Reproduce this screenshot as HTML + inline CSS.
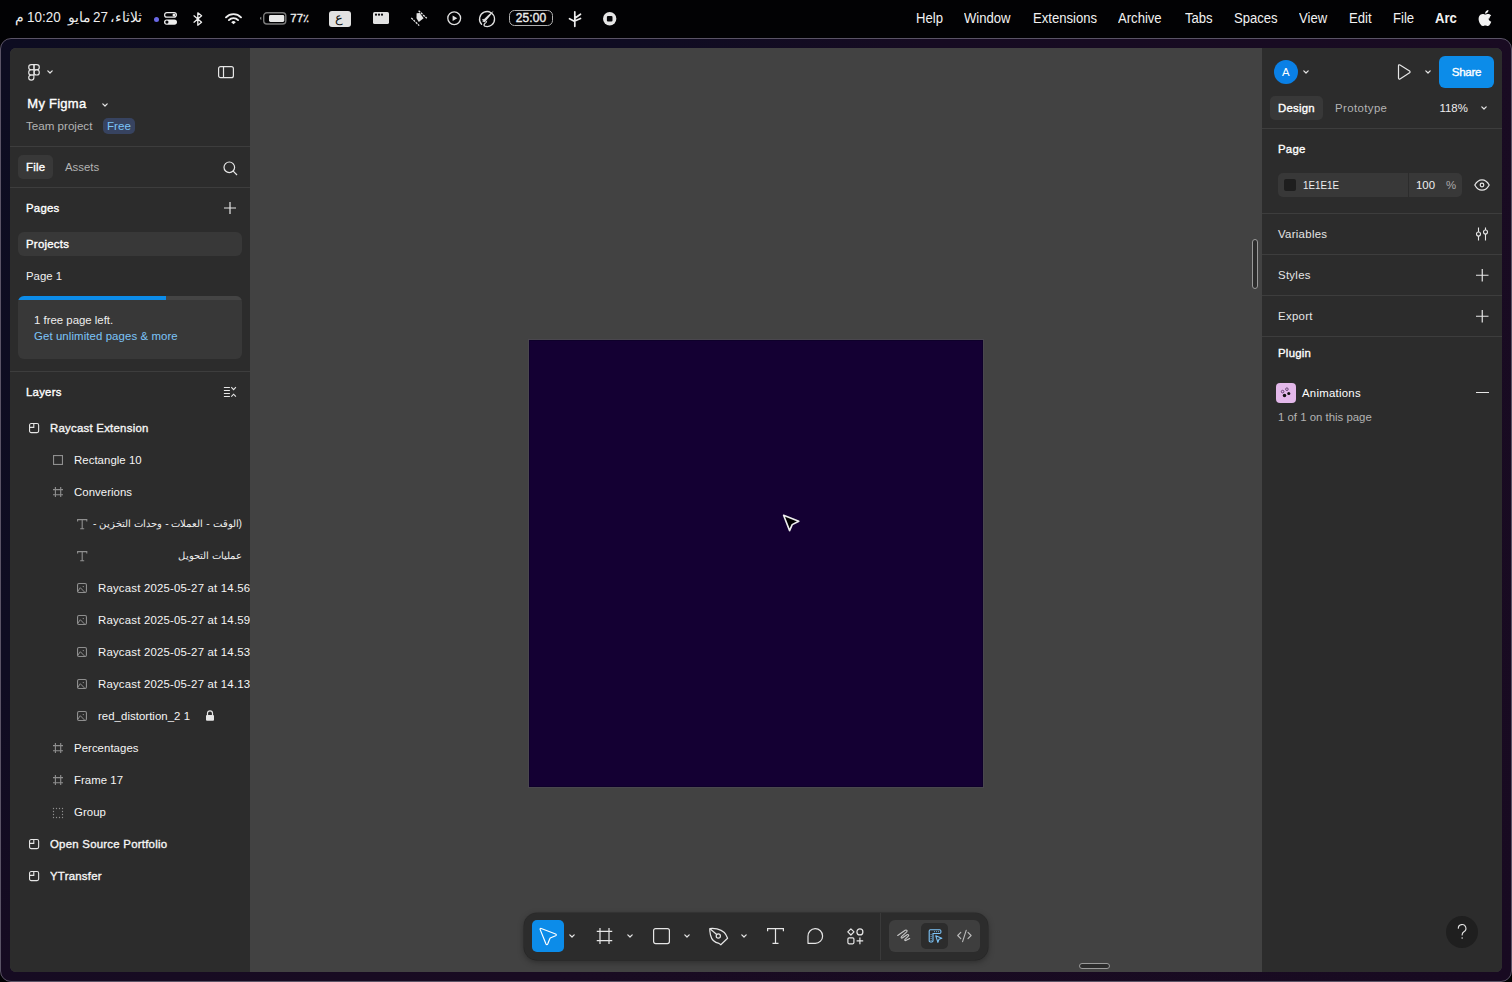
<!DOCTYPE html><html><head><meta charset="utf-8"><style>
*{margin:0;padding:0;box-sizing:border-box}
html,body{width:1512px;height:982px;overflow:hidden;background:#020204;font-family:"Liberation Sans",sans-serif;color:#fff}
.a{position:absolute;white-space:nowrap}
#win{position:absolute;left:0;top:38px;width:1512px;height:944px;border-radius:11px;border:1px solid #5a5366;background:linear-gradient(135deg,#0d0c21 0%,#0f0c22 26%,#160b22 38%,#190b22 60%,#180a21 100%)}
#app{position:absolute;left:10px;top:48px;width:1492px;height:924px;border-radius:6px;overflow:hidden;background:#424242}
.pn{position:absolute;background:#2c2c2c}
.hr{position:absolute;height:1px;background:#3d3d3d}
svg{position:absolute;overflow:visible}
</style></head><body>
<div class="a" style="left:915.8px;top:9.60px;font-size:14px;line-height:17.5px;color:#f2f2f2;transform:scaleX(0.935);transform-origin:0 0">Help</div>
<div class="a" style="left:964px;top:9.60px;font-size:14px;line-height:17.5px;color:#f2f2f2;transform:scaleX(0.935);transform-origin:0 0">Window</div>
<div class="a" style="left:1032.6px;top:9.60px;font-size:14px;line-height:17.5px;color:#f2f2f2;transform:scaleX(0.935);transform-origin:0 0">Extensions</div>
<div class="a" style="left:1118.2px;top:9.60px;font-size:14px;line-height:17.5px;color:#f2f2f2;transform:scaleX(0.935);transform-origin:0 0">Archive</div>
<div class="a" style="left:1184.6px;top:9.60px;font-size:14px;line-height:17.5px;color:#f2f2f2;transform:scaleX(0.935);transform-origin:0 0">Tabs</div>
<div class="a" style="left:1234px;top:9.60px;font-size:14px;line-height:17.5px;color:#f2f2f2;transform:scaleX(0.935);transform-origin:0 0">Spaces</div>
<div class="a" style="left:1299.2px;top:9.60px;font-size:14px;line-height:17.5px;color:#f2f2f2;transform:scaleX(0.935);transform-origin:0 0">View</div>
<div class="a" style="left:1348.6px;top:9.60px;font-size:14px;line-height:17.5px;color:#f2f2f2;transform:scaleX(0.935);transform-origin:0 0">Edit</div>
<div class="a" style="left:1392.6px;top:9.60px;font-size:14px;line-height:17.5px;color:#f2f2f2;transform:scaleX(0.935);transform-origin:0 0">File</div>
<div class="a" style="left:1434.8px;top:9.60px;font-size:14px;line-height:17.5px;color:#f2f2f2;font-weight:bold;transform:scaleX(0.935);transform-origin:0 0">Arc</div>
<svg style="left:1478px;top:9.5px" width="14" height="16" viewBox="0 0 14 16"><path fill="#f2f2f2" d="M11.5 8.5c0-2 1.6-3 1.7-3-1-1.4-2.4-1.6-2.9-1.6-1.2-.1-2.400.7-3 .7-.6 0-1.600-.7-2.600-.7C3.300 3.900 2 4.700 1.300 6c-1.400 2.500-.4 6.100 1 8.100.7 1 1.400 2 2.500 2 1 0 1.300-.6 2.500-.6s1.500.6 2.500.6c1.100 0 1.700-1 2.400-2 .7-1.100 1-2.200 1.100-2.300-.1 0-2.800-1.100-2.800-3.300zM9.500 2.600c.6-.7 1-1.600.9-2.600-.8 0-1.800.6-2.400 1.300-.5.600-1 1.500-.9 2.500.9.100 1.800-.5 2.400-1.200z"/></svg>
<div class="a" style="left:15px;top:9.58px;font-size:13.5px;line-height:16.88px;color:#eee;">م</div>
<div class="a" style="left:26.6px;top:9.10px;font-size:14px;line-height:17.5px;color:#eee;transform:scaleX(0.96);transform-origin:0 0">10:20</div>
<div class="a" style="left:68px;top:9.58px;font-size:13.5px;line-height:16.88px;color:#eee;">مايو</div>
<div class="a" style="left:93.2px;top:9.10px;font-size:14px;line-height:17.5px;color:#eee;transform:scaleX(0.96);transform-origin:0 0">27</div>
<div class="a" style="left:113px;top:9.58px;font-size:13.5px;line-height:16.88px;color:#eee;direction:rtl;unicode-bidi:bidi-override;width:29px;text-align:left">ثلاثاء،</div>
<div class="a" style="left:154px;top:16.5px;width:5px;height:5px;border-radius:50%;background:#6a68e6"></div>
<svg style="left:164px;top:12px" width="13" height="13" viewBox="0 0 13 13"><rect x="0.6" y="0.6" width="11.8" height="4.6" rx="2.3" fill="none" stroke="#eee" stroke-width="1.2"/><circle cx="10" cy="2.9" r="1.5" fill="#eee"/><rect x="0" y="7.4" width="13" height="5.4" rx="2.7" fill="#eee"/><circle cx="2.9" cy="10.1" r="1.6" fill="#07070a"/></svg>
<svg style="left:193px;top:12px" width="10" height="14" viewBox="0 0 10 14"><path d="M1 3.8 L8.6 10.2 L4.8 13.2 L4.8 0.8 L8.6 3.8 L1 10.2" fill="none" stroke="#eee" stroke-width="1.3" stroke-linejoin="round" stroke-linecap="round"/></svg>
<svg style="left:225px;top:13px" width="17" height="12" viewBox="0 0 17 12"><path d="M1 4.3 A10.5 10.5 0 0 1 16 4.3" fill="none" stroke="#eee" stroke-width="1.9" stroke-linecap="round"/><path d="M3.9 7.1 A6.3 6.3 0 0 1 13.1 7.1" fill="none" stroke="#eee" stroke-width="1.9" stroke-linecap="round"/><path d="M8.5 11.3 L6.2 9.3 A3.2 3.2 0 0 1 10.8 9.3 Z" fill="#eee"/></svg>
<svg style="left:259px;top:12px" width="28" height="13" viewBox="0 0 28 13"><path d="M2.300 4.700 C1.300 5 1 5.700 1 6.300 C1 6.900 1.300 7.600 2.300 7.900 Z" fill="#8a8a8a"/><rect x="4.7" y="0.7" width="22.1" height="11.3" rx="3.2" fill="none" stroke="#7a7a7a" stroke-width="1.4"/><rect x="10" y="3" width="15.3" height="7" rx="1.4" fill="#e8e8e8"/></svg>
<div class="a" style="left:290.3px;top:11.22px;font-size:11.4px;line-height:14.25px;color:#eee;-webkit-text-stroke:0.35px #eee;letter-spacing:0.25px;letter-spacing:-0.2px">77٪</div>
<div class="a" style="left:329px;top:10.5px;width:22px;height:16px;border-radius:3px;background:#e2e2e2"></div>
<div class="a" style="left:334.5px;top:9.87px;font-size:13px;line-height:16.25px;color:#111;">ع</div>
<svg style="left:373px;top:12px" width="16" height="12" viewBox="0 0 16 12"><rect x="0" y="0" width="16" height="12" rx="1.6" fill="#e2e2e2"/><circle cx="3" cy="2.7" r="1.1" fill="#07070a"/><circle cx="6" cy="2.7" r="1.1" fill="#07070a"/><circle cx="9" cy="2.7" r="1.1" fill="#07070a"/></svg>
<svg style="left:411px;top:10.4px" width="16" height="16" viewBox="0 0 16 16"><path d="M7.600 0.700 L15.800 8.300" stroke="#e6e6e6" stroke-width="1.3" stroke-dasharray="2.2 0.9"/><path d="M0.300 7.900 L8.200 15.600" stroke="#e6e6e6" stroke-width="1.3" stroke-dasharray="2.2 0.9"/><path d="M5.600 3.300 L8.800 3 L12.600 8.300 L7.800 11.900 L5.500 8.200 Z" fill="#e6e6e6"/></svg>
<svg style="left:447px;top:11px" width="15" height="15" viewBox="0 0 15 15"><circle cx="7.2" cy="7.2" r="6.4" fill="none" stroke="#e2e2e2" stroke-width="1.3"/><path d="M5.6 4.4 L10.3 7.2 L5.6 10 Z" fill="#e2e2e2"/></svg>
<svg style="left:478px;top:9.5px" width="18" height="18" viewBox="0 0 18 18"><path d="M3.600 14.200 A7.500 7.500 0 1 1 6.800 16.200 C5.600 15.700 5.800 14.300 7.300 13" fill="none" stroke="#e0e0e0" stroke-width="1.3" stroke-linecap="round"/><path d="M4.300 11.600 L5.800 9.600 C8.200 6.800 11.500 3.600 15.700 0.800 C13.300 4.800 10.600 7.800 8.400 10.200 L6.600 12.200 Z" fill="#e0e0e0"/><path d="M4 9.300 L6.500 8.800 L5 11 Z M8.800 12.900 L9.200 10.400 L7 11.900 Z" fill="#d0d0d0"/></svg>
<div class="a" style="left:509px;top:10.2px;width:44px;height:16px;border-radius:5.5px;border:1.5px solid #b0b0b0"></div>
<div class="a" style="left:515.8px;top:10.84px;font-size:12px;line-height:15.0px;color:#eee;-webkit-text-stroke:0.35px #eee;letter-spacing:0.25px;letter-spacing:0.1px">25:00</div>
<svg style="left:568px;top:10.5px" width="14" height="16" viewBox="0 0 14 16"><path d="M6.800 15.300 L6.800 0.800 M6.800 10.600 L1.500 7.700 M6.800 7.200 L12.500 3.200 M6.800 10 L12.500 7.500" fill="none" stroke="#eee" stroke-width="1.7" stroke-linecap="round"/></svg>
<svg style="left:603.3px;top:11.9px" width="13.4" height="13.4" viewBox="0 0 13.4 13.4"><circle cx="6.700" cy="6.700" r="6.700" fill="#e6e6e6"/><rect x="3.900" y="3.900" width="5.600" height="5.600" rx="1.100" fill="#07070a"/></svg>
<div id="win"></div>
<div id="app"></div>
<div class="pn" style="left:10px;top:48px;width:240px;height:924px;border-radius:6px 0 0 6px"></div>
<div class="pn" style="left:1262px;top:48px;width:240px;height:924px;border-radius:0 6px 6px 0"></div>
<div class="a" style="left:528.8px;top:339.6px;width:453.9px;height:447px;background:#140033;box-shadow:inset 0 0 0 1px #0e002a,0 0 0 1px rgba(90,80,100,.35)"></div>
<svg style="left:780px;top:512px" width="24" height="24" viewBox="0 0 24 24"><path d="M3.6 3.2 L18.8 9.2 L12.2 12.6 L9.6 18.6 Z" fill="#000" stroke="#eee" stroke-width="1.6" stroke-linejoin="round"/></svg>
<div class="a" style="left:1252px;top:239px;width:6px;height:50px;border-radius:3px;background:#2c2c2c;border:1px solid #9a9a9a"></div>
<div class="a" style="left:1079px;top:963px;width:31px;height:6px;border-radius:3px;background:#2c2c2c;border:1px solid #9a9a9a"></div>
<div class="a" style="left:524px;top:913px;width:464px;height:47px;border-radius:13px;background:#2c2c2c;box-shadow:0 2px 6px rgba(0,0,0,.35),0 0 0 0.5px rgba(0,0,0,.3)"></div>
<div class="a" style="left:532px;top:920px;width:32px;height:32px;border-radius:5px;background:#0c8ce9"></div>
<svg style="left:532px;top:920px" width="32" height="32" viewBox="0 0 32 32"><path d="M8.2 9.6 C7.800 8.800 8.400 8.200 9.200 8.500 L23.600 14 C24.600 14.400 24.500 15.400 23.600 15.800 L18.800 17.800 C18.200 18.100 17.900 18.500 17.700 19 L15.700 24 C15.300 24.900 14.400 24.900 14 24 Z" fill="none" stroke="#fff" stroke-width="1.2" stroke-linejoin="round"/></svg>
<svg style="left:569.3px;top:934.3px" width="6" height="4" viewBox="0 0 6 4"><path d="M0.8 0.8 L3 3 L5.2 0.8" fill="none" stroke="#e6e6e6" stroke-width="1.2" stroke-linecap="round" stroke-linejoin="round"/></svg>
<svg style="left:626.8px;top:934.3px" width="6" height="4" viewBox="0 0 6 4"><path d="M0.8 0.8 L3 3 L5.2 0.8" fill="none" stroke="#e6e6e6" stroke-width="1.2" stroke-linecap="round" stroke-linejoin="round"/></svg>
<svg style="left:683.6px;top:934.3px" width="6" height="4" viewBox="0 0 6 4"><path d="M0.8 0.8 L3 3 L5.2 0.8" fill="none" stroke="#e6e6e6" stroke-width="1.2" stroke-linecap="round" stroke-linejoin="round"/></svg>
<svg style="left:740.8px;top:934.3px" width="6" height="4" viewBox="0 0 6 4"><path d="M0.8 0.8 L3 3 L5.2 0.8" fill="none" stroke="#e6e6e6" stroke-width="1.2" stroke-linecap="round" stroke-linejoin="round"/></svg>
<svg style="left:596px;top:927px" width="17" height="18" viewBox="0 0 17 18"><path d="M4 1.1 V16.9 M13 1.1 V16.9 M0.750 4.400 H16.250 M0.750 13.600 H16.250" stroke="#e6e6e6" stroke-width="1.2"/></svg>
<svg style="left:653px;top:928px" width="17" height="16" viewBox="0 0 17 16"><rect x="0.6" y="0.6" width="15.8" height="15" rx="2" fill="none" stroke="#e6e6e6" stroke-width="1.2"/></svg>
<svg style="left:708px;top:927px" width="21" height="19" viewBox="0 0 21 19"><path d="M1.8 1.6 C5.5 0.6 12.5 2.2 16.3 5.5 C17.6 6.7 18.5 8.6 19.6 11.3 L12.8 17.8 L11 16.4 C6.5 15.6 3.5 12.5 2.5 8 C2.1 6 1.6 3.8 1.8 1.6 Z" fill="none" stroke="#e6e6e6" stroke-width="1.2" stroke-linejoin="round"/><circle cx="10.3" cy="9" r="2.1" fill="none" stroke="#e6e6e6" stroke-width="1.2"/><path d="M2 1.8 L8.7 7.5" stroke="#e6e6e6" stroke-width="1.2"/></svg>
<svg style="left:767px;top:928px" width="17" height="16" viewBox="0 0 17 16"><path d="M0.6 3.2 V0.6 H16.4 V3.2 M8.5 0.6 V15.4 M5.5 15.4 H11.5" fill="none" stroke="#e6e6e6" stroke-width="1.2"/></svg>
<svg style="left:807px;top:928px" width="17" height="16" viewBox="0 0 17 16"><path d="M1 15.3 L1 8.300 A7.300 7.300 0 1 1 8.300 15.300 Z" fill="none" stroke="#e6e6e6" stroke-width="1.2" stroke-linejoin="round"/></svg>
<svg style="left:847px;top:928px" width="17" height="17" viewBox="0 0 17 17"><path d="M3.900 0.800 L7 3.900 L3.900 7 L0.800 3.900 Z" fill="none" stroke="#e6e6e6" stroke-width="1.2" stroke-linejoin="round"/><circle cx="12.900" cy="3.900" r="3" fill="none" stroke="#e6e6e6" stroke-width="1.2"/><rect x="0.900" y="9.800" width="6" height="6" rx="1.200" fill="none" stroke="#e6e6e6" stroke-width="1.2"/><path d="M12.900 9.600 V16.200 M9.600 12.900 H16.200" stroke="#e6e6e6" stroke-width="1.2"/></svg>
<div class="a" style="left:880px;top:913px;width:1px;height:47px;background:#3a3a3a"></div>
<div class="a" style="left:889px;top:920px;width:91px;height:32px;border-radius:6px;background:#3e3e3e"></div>
<div class="a" style="left:921px;top:923px;width:27px;height:26px;border-radius:5px;background:#2c2c2c"></div>
<svg style="left:896px;top:928px" width="16" height="15" viewBox="0 0 16 15"><path d="M1.7 7.5 L9.2 2.3 C10.5 1.5 11.8 2.8 10.7 3.8 L5.5 8.7 C4.600 9.600 5.600 10.600 6.600 9.800 L11 6.800 C12.200 6 13.300 7.200 12.300 8.200 L9 11.300 C8.200 12.200 9.200 13 10.200 12.300 L13.700 10.600" fill="none" stroke="#c8c8c8" stroke-width="1.1" stroke-linecap="round" stroke-linejoin="round"/></svg>
<svg style="left:927.5px;top:929px" width="15" height="15" viewBox="0 0 15 15"><path d="M1.2 2 C1.2 1.300 1.700 0.800 2.400 0.800 H11.600 C12.400 0.800 12.900 1.300 12.900 2 V3.300 C12.900 4 12.400 4.500 11.600 4.500 H5 V11.800 C5 12.500 4.500 13 3.800 13 H2.400 C1.700 13 1.200 12.500 1.200 11.800 Z" fill="none" stroke="#7cc4f8" stroke-width="1.1"/><path d="M3.100 5 V12 M6 2.650 H11" stroke="#7cc4f8" stroke-width="0.9" stroke-dasharray="0.9 1.1"/><path d="M7.800 6.800 L13.800 9.200 L11 10.300 L9.900 13.400 Z" fill="#2c2c2c" stroke="#7cc4f8" stroke-width="1.1" stroke-linejoin="round"/></svg>
<svg style="left:957px;top:929px" width="15" height="14" viewBox="0 0 15 14"><path d="M3.800 3.300 L0.700 6.500 L3.800 9.700 M11 3.300 L14.100 6.500 L11 9.700 M9.200 1.300 L5.600 12.700" fill="none" stroke="#bdbdbd" stroke-width="1.1" stroke-linecap="round" stroke-linejoin="round"/></svg>
<svg style="left:28px;top:63.8px" width="12" height="16.4" viewBox="0 0 12 16.4"><g fill="none" stroke="#e6e6e6" stroke-width="1.15"><path d="M6 0.6 H3.3 A2.6 2.6 0 0 0 3.3 5.8 H6 Z"/><path d="M6 0.6 H8.7 A2.6 2.6 0 0 1 8.7 5.8 H6 Z"/><path d="M6 5.8 H3.3 A2.6 2.6 0 0 0 3.3 11 H6 Z"/><circle cx="8.7" cy="8.4" r="2.6"/><path d="M6 11 H3.3 A2.6 2.6 0 1 0 5.9 13.6 V11 Z"/></g></svg>
<svg style="left:46.5px;top:70px" width="6" height="4" viewBox="0 0 6 4"><path d="M0.8 0.8 L3 3 L5.2 0.8" fill="none" stroke="#e6e6e6" stroke-width="1.2" stroke-linecap="round" stroke-linejoin="round"/></svg>
<svg style="left:218px;top:65.9px" width="16" height="12.3" viewBox="0 0 16 12.3"><rect x="0.600" y="0.600" width="14.800" height="11.100" rx="2" fill="none" stroke="#e6e6e6" stroke-width="1.2"/><path d="M5.500 0.600 V11.700" stroke="#e6e6e6" stroke-width="1.2"/></svg>
<div class="a" style="left:27.3px;top:95.87px;font-size:13px;line-height:16.25px;color:#fff;-webkit-text-stroke:0.35px #fff;letter-spacing:0.25px;">My Figma</div>
<svg style="left:102.0px;top:102.5px" width="6" height="4" viewBox="0 0 6 4"><path d="M0.8 0.8 L3 3 L5.2 0.8" fill="none" stroke="#e6e6e6" stroke-width="1.2" stroke-linecap="round" stroke-linejoin="round"/></svg>
<div class="a" style="left:26px;top:118.73px;font-size:11.6px;line-height:14.5px;color:#b3b3b3;">Team project</div>
<div class="a" style="left:103px;top:118px;width:32px;height:16px;border-radius:5px;background:#374360"></div>
<div class="a" style="left:107px;top:118.73px;font-size:11.6px;line-height:14.5px;color:#7cc4f8;">Free</div>
<div class="hr" style="left:10px;top:146px;width:240px"></div>
<div class="a" style="left:18px;top:155px;width:35px;height:24px;border-radius:5px;background:#383838"></div>
<div class="a" style="left:26px;top:159.92px;font-size:11.4px;line-height:14.25px;color:#fff;-webkit-text-stroke:0.35px #fff;letter-spacing:0.25px;">File</div>
<div class="a" style="left:65px;top:159.92px;font-size:11.4px;line-height:14.25px;color:#b3b3b3;">Assets</div>
<svg style="left:223px;top:160.7px" width="15" height="15" viewBox="0 0 15 15"><circle cx="6.300" cy="6.300" r="5.300" fill="none" stroke="#e6e6e6" stroke-width="1.2"/><path d="M10.200 10.200 L14 14" stroke="#e6e6e6" stroke-width="1.2"/></svg>
<div class="hr" style="left:10px;top:187px;width:240px"></div>
<div class="a" style="left:26px;top:200.92px;font-size:11.4px;line-height:14.25px;color:#fff;-webkit-text-stroke:0.35px #fff;letter-spacing:0.25px;">Pages</div>
<svg style="left:224px;top:202px" width="12" height="12" viewBox="0 0 12 12"><path d="M6 0 V12 M0 6 H12" stroke="#e6e6e6" stroke-width="1.2"/></svg>
<div class="a" style="left:18px;top:232px;width:224px;height:24px;border-radius:6px;background:#383838"></div>
<div class="a" style="left:26px;top:236.92px;font-size:11.4px;line-height:14.25px;color:#fff;-webkit-text-stroke:0.35px #fff;letter-spacing:0.25px;">Projects</div>
<div class="a" style="left:26px;top:268.92px;font-size:11.4px;line-height:14.25px;color:#f0f0f0;">Page 1</div>
<div class="a" style="left:18px;top:296px;width:224px;height:63px;border-radius:6px;background:#383838;overflow:hidden"><div style="position:absolute;left:0;top:0;width:148px;height:4px;background:#0c8ce9"></div><div style="position:absolute;left:148px;top:0;width:76px;height:4px;background:#444"></div></div>
<div class="a" style="left:34px;top:312.92px;font-size:11.4px;line-height:14.25px;color:#eee;">1 free page left.</div>
<div class="a" style="left:34px;top:328.92px;font-size:11.4px;line-height:14.25px;color:#7cc4f8;letter-spacing:0.1px">Get unlimited pages &amp; more</div>
<div class="hr" style="left:10px;top:371px;width:240px"></div>
<div class="a" style="left:26px;top:384.92px;font-size:11.4px;line-height:14.25px;color:#fff;-webkit-text-stroke:0.35px #fff;letter-spacing:0.25px;">Layers</div>
<svg style="left:223px;top:386px" width="14" height="12" viewBox="0 0 14 12"><path d="M0.900 1.500 H6.900 M0.900 4.450 H6.900 M0.900 7.500 H6.900 M0.900 10.500 H6.900" stroke="#e6e6e6" stroke-width="1.1"/><path d="M8.300 1.200 L10.600 3.600 L12.900 1.200 M8.300 10.600 L10.600 8.200 L12.900 10.600" fill="none" stroke="#e6e6e6" stroke-width="1.1"/></svg>
<svg style="left:28.9px;top:423.1px" width="10.2" height="10.2" viewBox="0 0 10.2 10.2"><rect x="0.550" y="0.550" width="9.100" height="9.100" rx="1.600" fill="none" stroke="#e6e6e6" stroke-width="1.1"/><path d="M0.550 4.400 H4.800 V0.550" fill="none" stroke="#e6e6e6" stroke-width="1.1"/></svg>
<div class="a" style="left:50px;top:418px;width:200px;height:20px;overflow:hidden">
<div class="a" style="left:0px;top:2.92px;font-size:11.4px;line-height:14.25px;color:#f5f5f5;-webkit-text-stroke:0.35px #f5f5f5;letter-spacing:0.25px;">Raycast Extension</div>
</div>
<svg style="left:53.0px;top:455.1px" width="10" height="10" viewBox="0 0 10 10"><rect x="0.550" y="0.550" width="8.900" height="8.900" fill="none" stroke="#8f8f8f" stroke-width="1.1"/></svg>
<div class="a" style="left:74px;top:450px;width:176px;height:20px;overflow:hidden">
<div class="a" style="left:0px;top:2.92px;font-size:11.4px;line-height:14.25px;color:#f5f5f5;letter-spacing:0.05px">Rectangle 10</div>
</div>
<svg style="left:53.0px;top:487.1px" width="10" height="10" viewBox="0 0 10 10"><path d="M2.400 0 V10 M7.700 0 V10 M0 2.600 H10 M0 7.700 H10" stroke="#8f8f8f" stroke-width="1.1"/></svg>
<div class="a" style="left:74px;top:482px;width:176px;height:20px;overflow:hidden">
<div class="a" style="left:0px;top:2.92px;font-size:11.4px;line-height:14.25px;color:#f5f5f5;letter-spacing:0.05px">Converions</div>
</div>
<svg style="left:76.8px;top:518.9px" width="10.4" height="10.4" viewBox="0 0 10.4 10.4"><path d="M0.600 2.600 V0.600 H9.800 V2.600 M5.200 0.600 V9.800 M3.200 9.800 H7.200" fill="none" stroke="#8f8f8f" stroke-width="1.1"/></svg>
<div class="a" style="left:89.5px;top:517.99px;font-size:10.3px;line-height:12.88px;color:#eee;width:152.5px;direction:rtl;overflow:hidden;text-align:right">(الوقت - العملات - وحدات التخزين - وغيرها)</div>
<svg style="left:76.8px;top:550.9px" width="10.4" height="10.4" viewBox="0 0 10.4 10.4"><path d="M0.600 2.600 V0.600 H9.800 V2.600 M5.200 0.600 V9.800 M3.200 9.800 H7.200" fill="none" stroke="#8f8f8f" stroke-width="1.1"/></svg>
<div class="a" style="left:150px;top:549.99px;font-size:10.3px;line-height:12.88px;color:#eee;width:92px;direction:rtl;text-align:right">عمليات التحويل</div>
<svg style="left:76.9px;top:583.1px" width="10" height="10" viewBox="0 0 10 10"><rect x="0.550" y="0.550" width="8.900" height="8.900" rx="1.400" fill="none" stroke="#8f8f8f" stroke-width="1.1"/><path d="M0.600 8.600 L3.300 4.700 L7.800 9.300" fill="none" stroke="#8f8f8f" stroke-width="1"/><circle cx="6.300" cy="3.600" r="0.700" fill="#8f8f8f"/></svg>
<div class="a" style="left:98px;top:578px;width:152px;height:20px;overflow:hidden">
<div class="a" style="left:0px;top:2.92px;font-size:11.4px;line-height:14.25px;color:#f5f5f5;letter-spacing:0.2px">Raycast 2025-05-27 at 14.56.</div>
</div>
<svg style="left:76.9px;top:615.1px" width="10" height="10" viewBox="0 0 10 10"><rect x="0.550" y="0.550" width="8.900" height="8.900" rx="1.400" fill="none" stroke="#8f8f8f" stroke-width="1.1"/><path d="M0.600 8.600 L3.300 4.700 L7.800 9.300" fill="none" stroke="#8f8f8f" stroke-width="1"/><circle cx="6.300" cy="3.600" r="0.700" fill="#8f8f8f"/></svg>
<div class="a" style="left:98px;top:610px;width:152px;height:20px;overflow:hidden">
<div class="a" style="left:0px;top:2.92px;font-size:11.4px;line-height:14.25px;color:#f5f5f5;letter-spacing:0.2px">Raycast 2025-05-27 at 14.59.</div>
</div>
<svg style="left:76.9px;top:647.1px" width="10" height="10" viewBox="0 0 10 10"><rect x="0.550" y="0.550" width="8.900" height="8.900" rx="1.400" fill="none" stroke="#8f8f8f" stroke-width="1.1"/><path d="M0.600 8.600 L3.300 4.700 L7.800 9.300" fill="none" stroke="#8f8f8f" stroke-width="1"/><circle cx="6.300" cy="3.600" r="0.700" fill="#8f8f8f"/></svg>
<div class="a" style="left:98px;top:642px;width:152px;height:20px;overflow:hidden">
<div class="a" style="left:0px;top:2.92px;font-size:11.4px;line-height:14.25px;color:#f5f5f5;letter-spacing:0.2px">Raycast 2025-05-27 at 14.53.</div>
</div>
<svg style="left:76.9px;top:679.1px" width="10" height="10" viewBox="0 0 10 10"><rect x="0.550" y="0.550" width="8.900" height="8.900" rx="1.400" fill="none" stroke="#8f8f8f" stroke-width="1.1"/><path d="M0.600 8.600 L3.300 4.700 L7.800 9.300" fill="none" stroke="#8f8f8f" stroke-width="1"/><circle cx="6.300" cy="3.600" r="0.700" fill="#8f8f8f"/></svg>
<div class="a" style="left:98px;top:674px;width:152px;height:20px;overflow:hidden">
<div class="a" style="left:0px;top:2.92px;font-size:11.4px;line-height:14.25px;color:#f5f5f5;letter-spacing:0.2px">Raycast 2025-05-27 at 14.13.</div>
</div>
<svg style="left:76.9px;top:711.1px" width="10" height="10" viewBox="0 0 10 10"><rect x="0.550" y="0.550" width="8.900" height="8.900" rx="1.400" fill="none" stroke="#8f8f8f" stroke-width="1.1"/><path d="M0.600 8.600 L3.300 4.700 L7.800 9.300" fill="none" stroke="#8f8f8f" stroke-width="1"/><circle cx="6.300" cy="3.600" r="0.700" fill="#8f8f8f"/></svg>
<div class="a" style="left:98px;top:706px;width:152px;height:20px;overflow:hidden">
<div class="a" style="left:0px;top:2.92px;font-size:11.4px;line-height:14.25px;color:#f5f5f5;letter-spacing:0.05px">red_distortion_2 1</div>
</div>
<svg style="left:205px;top:710px" width="10" height="11" viewBox="0 0 10 11"><path d="M2.500 5 V3.300 A2.500 2.500 0 0 1 7.500 3.300 V5" fill="none" stroke="#e6e6e6" stroke-width="1.2"/><rect x="1" y="5" width="8" height="5.800" rx="1" fill="#e6e6e6"/></svg>
<svg style="left:53.0px;top:743.1px" width="10" height="10" viewBox="0 0 10 10"><path d="M2.400 0 V10 M7.700 0 V10 M0 2.600 H10 M0 7.700 H10" stroke="#8f8f8f" stroke-width="1.1"/></svg>
<div class="a" style="left:74px;top:738px;width:176px;height:20px;overflow:hidden">
<div class="a" style="left:0px;top:2.92px;font-size:11.4px;line-height:14.25px;color:#f5f5f5;letter-spacing:0.05px">Percentages</div>
</div>
<svg style="left:53.0px;top:775.1px" width="10" height="10" viewBox="0 0 10 10"><path d="M2.400 0 V10 M7.700 0 V10 M0 2.600 H10 M0 7.700 H10" stroke="#8f8f8f" stroke-width="1.1"/></svg>
<div class="a" style="left:74px;top:770px;width:176px;height:20px;overflow:hidden">
<div class="a" style="left:0px;top:2.92px;font-size:11.4px;line-height:14.25px;color:#f5f5f5;letter-spacing:0.05px">Frame 17</div>
</div>
<svg style="left:53px;top:807.5px" width="10" height="10" viewBox="0 0 10 10"><circle cx="0.5" cy="0.5" r="0.650" fill="#8f8f8f"/><circle cx="3.5" cy="0.5" r="0.650" fill="#8f8f8f"/><circle cx="6.5" cy="0.5" r="0.650" fill="#8f8f8f"/><circle cx="9.5" cy="0.5" r="0.650" fill="#8f8f8f"/><circle cx="0.5" cy="9.5" r="0.650" fill="#8f8f8f"/><circle cx="3.5" cy="9.5" r="0.650" fill="#8f8f8f"/><circle cx="6.5" cy="9.5" r="0.650" fill="#8f8f8f"/><circle cx="9.5" cy="9.5" r="0.650" fill="#8f8f8f"/><circle cx="0.5" cy="3.5" r="0.650" fill="#8f8f8f"/><circle cx="0.5" cy="6.5" r="0.650" fill="#8f8f8f"/><circle cx="9.5" cy="3.5" r="0.650" fill="#8f8f8f"/><circle cx="9.5" cy="6.5" r="0.650" fill="#8f8f8f"/></svg>
<div class="a" style="left:74px;top:802px;width:176px;height:20px;overflow:hidden">
<div class="a" style="left:0px;top:2.92px;font-size:11.4px;line-height:14.25px;color:#f5f5f5;letter-spacing:0.05px">Group</div>
</div>
<svg style="left:28.9px;top:839.1px" width="10.2" height="10.2" viewBox="0 0 10.2 10.2"><rect x="0.550" y="0.550" width="9.100" height="9.100" rx="1.600" fill="none" stroke="#e6e6e6" stroke-width="1.1"/><path d="M0.550 4.400 H4.800 V0.550" fill="none" stroke="#e6e6e6" stroke-width="1.1"/></svg>
<div class="a" style="left:50px;top:834px;width:200px;height:20px;overflow:hidden">
<div class="a" style="left:0px;top:2.92px;font-size:11.4px;line-height:14.25px;color:#f5f5f5;-webkit-text-stroke:0.35px #f5f5f5;letter-spacing:0.25px;">Open Source Portfolio</div>
</div>
<svg style="left:28.9px;top:871.1px" width="10.2" height="10.2" viewBox="0 0 10.2 10.2"><rect x="0.550" y="0.550" width="9.100" height="9.100" rx="1.600" fill="none" stroke="#e6e6e6" stroke-width="1.1"/><path d="M0.550 4.400 H4.800 V0.550" fill="none" stroke="#e6e6e6" stroke-width="1.1"/></svg>
<div class="a" style="left:50px;top:866px;width:200px;height:20px;overflow:hidden">
<div class="a" style="left:0px;top:2.92px;font-size:11.4px;line-height:14.25px;color:#f5f5f5;-webkit-text-stroke:0.35px #f5f5f5;letter-spacing:0.25px;">YTransfer</div>
</div>
<div class="a" style="left:1274px;top:59.5px;width:24.3px;height:24.5px;border-radius:50%;background:#0a80e6"></div>
<div class="a" style="left:1282px;top:64.82px;font-size:11.4px;line-height:14.25px;color:#fff;">A</div>
<svg style="left:1302.5px;top:70px" width="6" height="4" viewBox="0 0 6 4"><path d="M0.8 0.8 L3 3 L5.2 0.8" fill="none" stroke="#e6e6e6" stroke-width="1.2" stroke-linecap="round" stroke-linejoin="round"/></svg>
<svg style="left:1397px;top:64px" width="14" height="16" viewBox="0 0 14 16"><path d="M1.500 1.800 C1.500 0.900 2.300 0.500 3 0.900 L12.600 7 C13.200 7.400 13.200 8.400 12.600 8.800 L3 14.900 C2.300 15.300 1.500 14.900 1.500 14 Z" fill="none" stroke="#e6e6e6" stroke-width="1.2"/></svg>
<svg style="left:1424.5px;top:70px" width="6" height="4" viewBox="0 0 6 4"><path d="M0.8 0.8 L3 3 L5.2 0.8" fill="none" stroke="#e6e6e6" stroke-width="1.2" stroke-linecap="round" stroke-linejoin="round"/></svg>
<div class="a" style="left:1439px;top:56px;width:55px;height:32px;border-radius:6px;background:#0c8ce9"></div>
<div class="a" style="left:1451.8px;top:65.23px;font-size:11.6px;line-height:14.5px;color:#fff;-webkit-text-stroke:0.35px #fff;letter-spacing:0.25px;letter-spacing:-0.35px">Share</div>
<div class="a" style="left:1270px;top:96px;width:53px;height:24px;border-radius:5px;background:#383838"></div>
<div class="a" style="left:1278px;top:100.92px;font-size:11.4px;line-height:14.25px;color:#fff;-webkit-text-stroke:0.35px #fff;letter-spacing:0.25px;">Design</div>
<div class="a" style="left:1335px;top:100.92px;font-size:11.4px;line-height:14.25px;color:#b3b3b3;letter-spacing:0.4px">Prototype</div>
<div class="a" style="left:1439.5px;top:100.92px;font-size:11.4px;line-height:14.25px;color:#eee;">118%</div>
<svg style="left:1480.5px;top:106px" width="6" height="4" viewBox="0 0 6 4"><path d="M0.8 0.8 L3 3 L5.2 0.8" fill="none" stroke="#e6e6e6" stroke-width="1.2" stroke-linecap="round" stroke-linejoin="round"/></svg>
<div class="hr" style="left:1262px;top:128px;width:240px"></div>
<div class="a" style="left:1278px;top:141.92px;font-size:11.4px;line-height:14.25px;color:#fff;-webkit-text-stroke:0.35px #fff;letter-spacing:0.25px;">Page</div>
<div class="a" style="left:1278px;top:173px;width:184px;height:24px;border-radius:5px;background:#383838"></div>
<div class="a" style="left:1408px;top:173px;width:1px;height:24px;background:#2c2c2c"></div>
<div class="a" style="left:1284px;top:179px;width:12px;height:12px;border-radius:2px;background:#1e1e1e"></div>
<div class="a" style="left:1303px;top:177.92px;font-size:11.4px;line-height:14.25px;color:#eee;transform:scaleX(0.86);transform-origin:0 0">1E1E1E</div>
<div class="a" style="left:1416px;top:177.92px;font-size:11.4px;line-height:14.25px;color:#eee;">100</div>
<div class="a" style="left:1446px;top:177.92px;font-size:11.4px;line-height:14.25px;color:#aaa;">%</div>
<svg style="left:1474px;top:179px" width="16" height="12" viewBox="0 0 16 12"><path d="M0.800 6 C2.800 2.300 5.200 0.800 8 0.800 C10.800 0.800 13.200 2.300 15.200 6 C13.200 9.700 10.800 11.200 8 11.200 C5.200 11.200 2.800 9.700 0.800 6 Z" fill="none" stroke="#e6e6e6" stroke-width="1.2"/><circle cx="8" cy="6" r="1.800" fill="none" stroke="#e6e6e6" stroke-width="1.2"/></svg>
<div class="hr" style="left:1262px;top:213px;width:240px"></div>
<div class="a" style="left:1278px;top:226.92px;font-size:11.4px;line-height:14.25px;color:#e6e6e6;letter-spacing:0.3px">Variables</div>
<svg style="left:1475px;top:227px" width="14" height="14" viewBox="0 0 14 14"><path d="M3.500 0.500 V5 M3.500 9 V13.500 M10.500 0.500 V3 M10.500 7 V13.500" stroke="#e6e6e6" stroke-width="1.1"/><circle cx="3.500" cy="7" r="2" fill="none" stroke="#e6e6e6" stroke-width="1.1"/><circle cx="10.500" cy="5" r="2" fill="none" stroke="#e6e6e6" stroke-width="1.1"/></svg>
<div class="hr" style="left:1262px;top:254px;width:240px"></div>
<div class="a" style="left:1278px;top:267.92px;font-size:11.4px;line-height:14.25px;color:#e6e6e6;letter-spacing:0.3px">Styles</div>
<svg style="left:1475.5px;top:268.5px" width="12.5" height="12.5" viewBox="0 0 12.5 12.5"><path d="M6.25 0 V12.5 M0 6.25 H12.5" stroke="#e6e6e6" stroke-width="1.2"/></svg>
<div class="hr" style="left:1262px;top:295px;width:240px"></div>
<div class="a" style="left:1278px;top:308.92px;font-size:11.4px;line-height:14.25px;color:#e6e6e6;letter-spacing:0.3px">Export</div>
<svg style="left:1475.5px;top:309.5px" width="12.5" height="12.5" viewBox="0 0 12.5 12.5"><path d="M6.25 0 V12.5 M0 6.25 H12.5" stroke="#e6e6e6" stroke-width="1.2"/></svg>
<div class="hr" style="left:1262px;top:336px;width:240px"></div>
<div class="a" style="left:1278px;top:345.92px;font-size:11.4px;line-height:14.25px;color:#fff;-webkit-text-stroke:0.35px #fff;letter-spacing:0.25px;">Plugin</div>
<div class="a" style="left:1276px;top:383px;width:20px;height:20px;border-radius:4px;background:#e3b8ea"></div>
<svg style="left:1276px;top:383px" width="20" height="20" viewBox="0 0 20 20"><circle cx="6.600" cy="8.600" r="1.300" fill="none" stroke="#5a3a66" stroke-width="0.9"/><circle cx="10.900" cy="6.200" r="1.300" fill="none" stroke="#5a3a66" stroke-width="0.9"/><circle cx="8.500" cy="12.500" r="1.750" fill="#111"/><circle cx="12.800" cy="10.500" r="1.550" fill="#111"/></svg>
<div class="a" style="left:1302px;top:385.92px;font-size:11.4px;line-height:14.25px;color:#fff;letter-spacing:0.25px">Animations</div>
<div class="a" style="left:1475.5px;top:392px;width:13px;height:1.3px;background:#e6e6e6"></div>
<div class="a" style="left:1278px;top:409.92px;font-size:11.4px;line-height:14.25px;color:#b3b3b3;">1 of 1 on this page</div>
<div class="a" style="left:1445.5px;top:916px;width:32px;height:32px;border-radius:50%;background:#1f1f1f"></div>
<svg style="left:1456px;top:924px" width="12" height="16" viewBox="0 0 12 16"><path d="M2.300 4.300 A3.800 3.800 0 1 1 7.900 7.700 C6.700 8.500 6.100 9.300 6.100 10.900" fill="none" stroke="#e6e6e6" stroke-width="1.1" stroke-linecap="round"/><circle cx="6.100" cy="14" r="0.750" fill="#e6e6e6"/></svg>
</body></html>
